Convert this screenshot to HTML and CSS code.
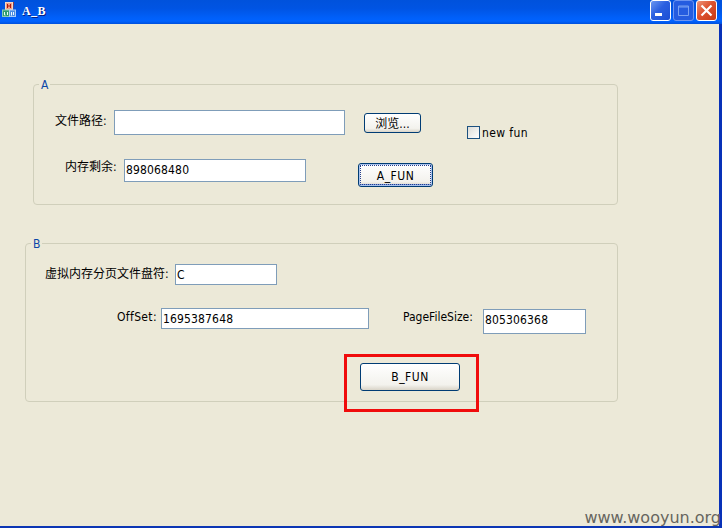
FILE: index.html
```html
<!DOCTYPE html>
<html lang="zh-CN">
<head>
<meta charset="utf-8">
<title>A_B</title>
<link rel="stylesheet" href="styles.css">
</head>
<body>
<div class="window">
  <header class="titlebar">
    <svg class="app-icon" width="16" height="17" viewBox="0 0 16 17">
      <path d="M4 3l2-2h6l-1 8H4z" fill="#a33a2a"/>
      <rect x="3.500" y="1.500" width="7" height="7" fill="#f0a088" stroke="#f6d8c4"/>
      <path d="M5.500 3v4M8.500 3v4M5.500 5h3" stroke="#b01808" fill="none"/>
      <rect x=".5" y="9" width="7" height="6.500" fill="#2f9a72" stroke="#8ccbb0"/>
      <path d="M2.500 11v3h1M5.500 11v3" stroke="#e8fff0" fill="none"/>
      <rect x="7.500" y="9" width="6" height="6.500" fill="#4b8de0" stroke="#a8ccf8"/>
      <path d="M9.500 11v3.500M11.500 11v3" stroke="#f0f8ff" fill="none"/>
    </svg>
    <h1 class="title">A_B</h1>
    <div class="controls">
      <span class="control"><svg width="19" height="19"><path d="M4 13.500h7" stroke="#fff" stroke-width="3"/></svg></span>
      <span class="control disabled"><svg width="19" height="19"><path d="M4.500 5h10v9.500h-10zM4 6h11" stroke="#7ba2f2" fill="none"/></svg></span>
      <span class="control close"><svg width="19" height="19"><path d="M4.500 4.500l10 10M14.500 4.500l-10 10" stroke="#fff" stroke-width="2.200"/></svg></span>
    </div>
  </header>
  <main class="client">
    <section class="group group-a">
      <h2 class="legend">A</h2>
      <div class="fields">
        <div class="row">
          <label class="label path-label">文件路径:</label>
          <div class="input path-input"></div>
        </div>
        <div class="row memory-row">
          <label class="label memory-label">内存剩余:</label>
          <div class="input memory-input">898068480</div>
        </div>
      </div>
      <div class="actions">
        <button class="button browse">浏览...</button>
        <button class="button focused"><span>A_FUN</span></button>
      </div>
      <div class="check"><span class="box"></span><span class="check-text">new fun</span></div>
    </section>
    <section class="group group-b">
      <h2 class="legend">B</h2>
      <div class="row">
        <label class="label drive-label">虚拟内存分页文件盘符:</label>
        <div class="input drive-input">C</div>
      </div>
      <div class="row offset-row">
        <label class="label offset-label">OffSet:</label>
        <div class="input offset-input">1695387648</div>
        <label class="label size-label">PageFileSize:</label>
        <div class="input size-input">805306368</div>
      </div>
      <div class="highlight"><button class="button b-button">B_FUN</button></div>
    </section>
  </main>
  <div class="watermark">www.wooyun.org</div>
</div>
</body>
</html>
```
FILE: styles.css
```css
* { box-sizing: border-box; }
body {
  margin: 0;
  overflow: hidden;
  font: 12px/16px "DejaVu Sans Condensed", "Noto Sans CJK SC", sans-serif;
  color: #000;
}
.window {
  position: relative;
  width: 722px;
  height: 528px;
  background: #ece9d8;
  border-right: 3px solid #0831b8;
  border-bottom: 2px solid #0c36b4;
}
.titlebar {
  display: flex;
  width: 722px;
  height: 24px;
  padding-left: 2px;
  background: linear-gradient(#0052dc, #0054e3 35%, #0060fa 75%, #0062ff 88%, #0050dc);
}
.app-icon { margin-top: 1px; }
.title {
  margin: 3px 0 0 4px;
  font: bold 12px/16px "Liberation Serif", serif;
  letter-spacing: 0.4px;
  color: #fff;
  text-shadow: 1px 1px #0a1e80;
}
.controls { display: flex; gap: 2px; margin: 0 5px 0 auto; }
.control {
  width: 21px;
  height: 21px;
  border: 1px solid #fff;
  border-radius: 3px;
  background: linear-gradient(135deg, #6c97f0, #2a5fe0 45%, #1c4fd4);
}
.control svg { display: block; }
.disabled { border-color: #6c94f0; background: #255ce0; }
.close { background: linear-gradient(135deg, #ee9478, #dd5230 45%, #c83a14); }
.client { padding: 60px 0 0 25px; }
.group {
  position: relative;
  border: 1px solid #d0cfbb;
  border-radius: 4px;
}
.legend {
  position: absolute;
  top: -8px;
  left: 5px;
  margin: 0;
  padding: 0 2px;
  background: #ece9d8;
  color: #0b46a8;
  font-size: 12px;
  font-weight: normal;
  line-height: 16px;
}
.group-a {
  display: flex;
  width: 585px;
  height: 121px;
  margin-left: 8px;
  padding-top: 25px;
}
.group-b {
  width: 593px;
  height: 159px;
  margin-top: 38px;
  padding-top: 20px;
}
.row { display: flex; }
.label { white-space: nowrap; }
.input {
  background: #fff;
  border: 1px solid #7f9db9;
  padding: 2px 0 0 1px;
  letter-spacing: 0.15px;
}
.fields { width: 312px; }
.path-label { width: 80px; padding: 3px 0 0 21px; }
.path-input { width: 231px; height: 25px; }
.memory-row { margin-top: 24px; }
.memory-label { width: 90px; padding: 0 0 0 31px; }
.memory-input { width: 182px; height: 23px; }
.actions {
  display: flex;
  flex-direction: column;
  width: 87px;
  padding: 3px 0 0 12px;
}
.button {
  padding: 0;
  border: 1px solid #003c74;
  border-radius: 3px;
  background: linear-gradient(#fff, #f3f2ed 80%, #d9d4c8);
  font: inherit;
  color: #000;
  letter-spacing: 0.5px;
}
.browse { width: 57px; height: 20px; margin: 0 0 30px 6px; padding-top: 1px; line-height: 16px; letter-spacing: 0; }
.focused {
  width: 75px;
  height: 24px;
  padding: 1px;
  box-shadow: inset 0 0 0 1px #a9c2ee, inset 0 -2px #7f9fe0;
}
.focused span { display: block; height: 20px; line-height: 20px; border: 1px dotted #27408c; }
.check { display: flex; height: 16px; margin: 15px 0 0 34px; }
.box {
  width: 13px;
  height: 13px;
  margin-top: 1px;
  border: 1px solid #1c5180;
  background: linear-gradient(135deg, #dcdcd7, #fff);
}
.check-text { margin-left: 2px; letter-spacing: 0.4px; }
.drive-label { width: 149px; padding: 2px 0 0 19px; }
.drive-input { width: 102px; height: 21px; }
.offset-row { margin-top: 23px; }
.offset-label { width: 135px; padding-left: 91px; padding-top: 1px; letter-spacing: 0.35px; }
.offset-input { width: 208px; height: 21px; }
.size-label { width: 114px; padding: 1px 0 0 34px; }
.size-input { width: 103px; height: 25px; margin-top: 1px; }
.highlight {
  position: relative;
  width: 135px;
  height: 58px;
  margin: 20px 0 0 318px;
  padding: 6px 0 0 13px;
  border: 3px solid #f00c0c;
}
.b-button { display: block; width: 100px; height: 28px; }
.watermark {
  position: absolute;
  right: -2px;
  bottom: -2px;
  font: 16px/20px "DejaVu Sans", sans-serif;
  color: #66655e;
}
```
